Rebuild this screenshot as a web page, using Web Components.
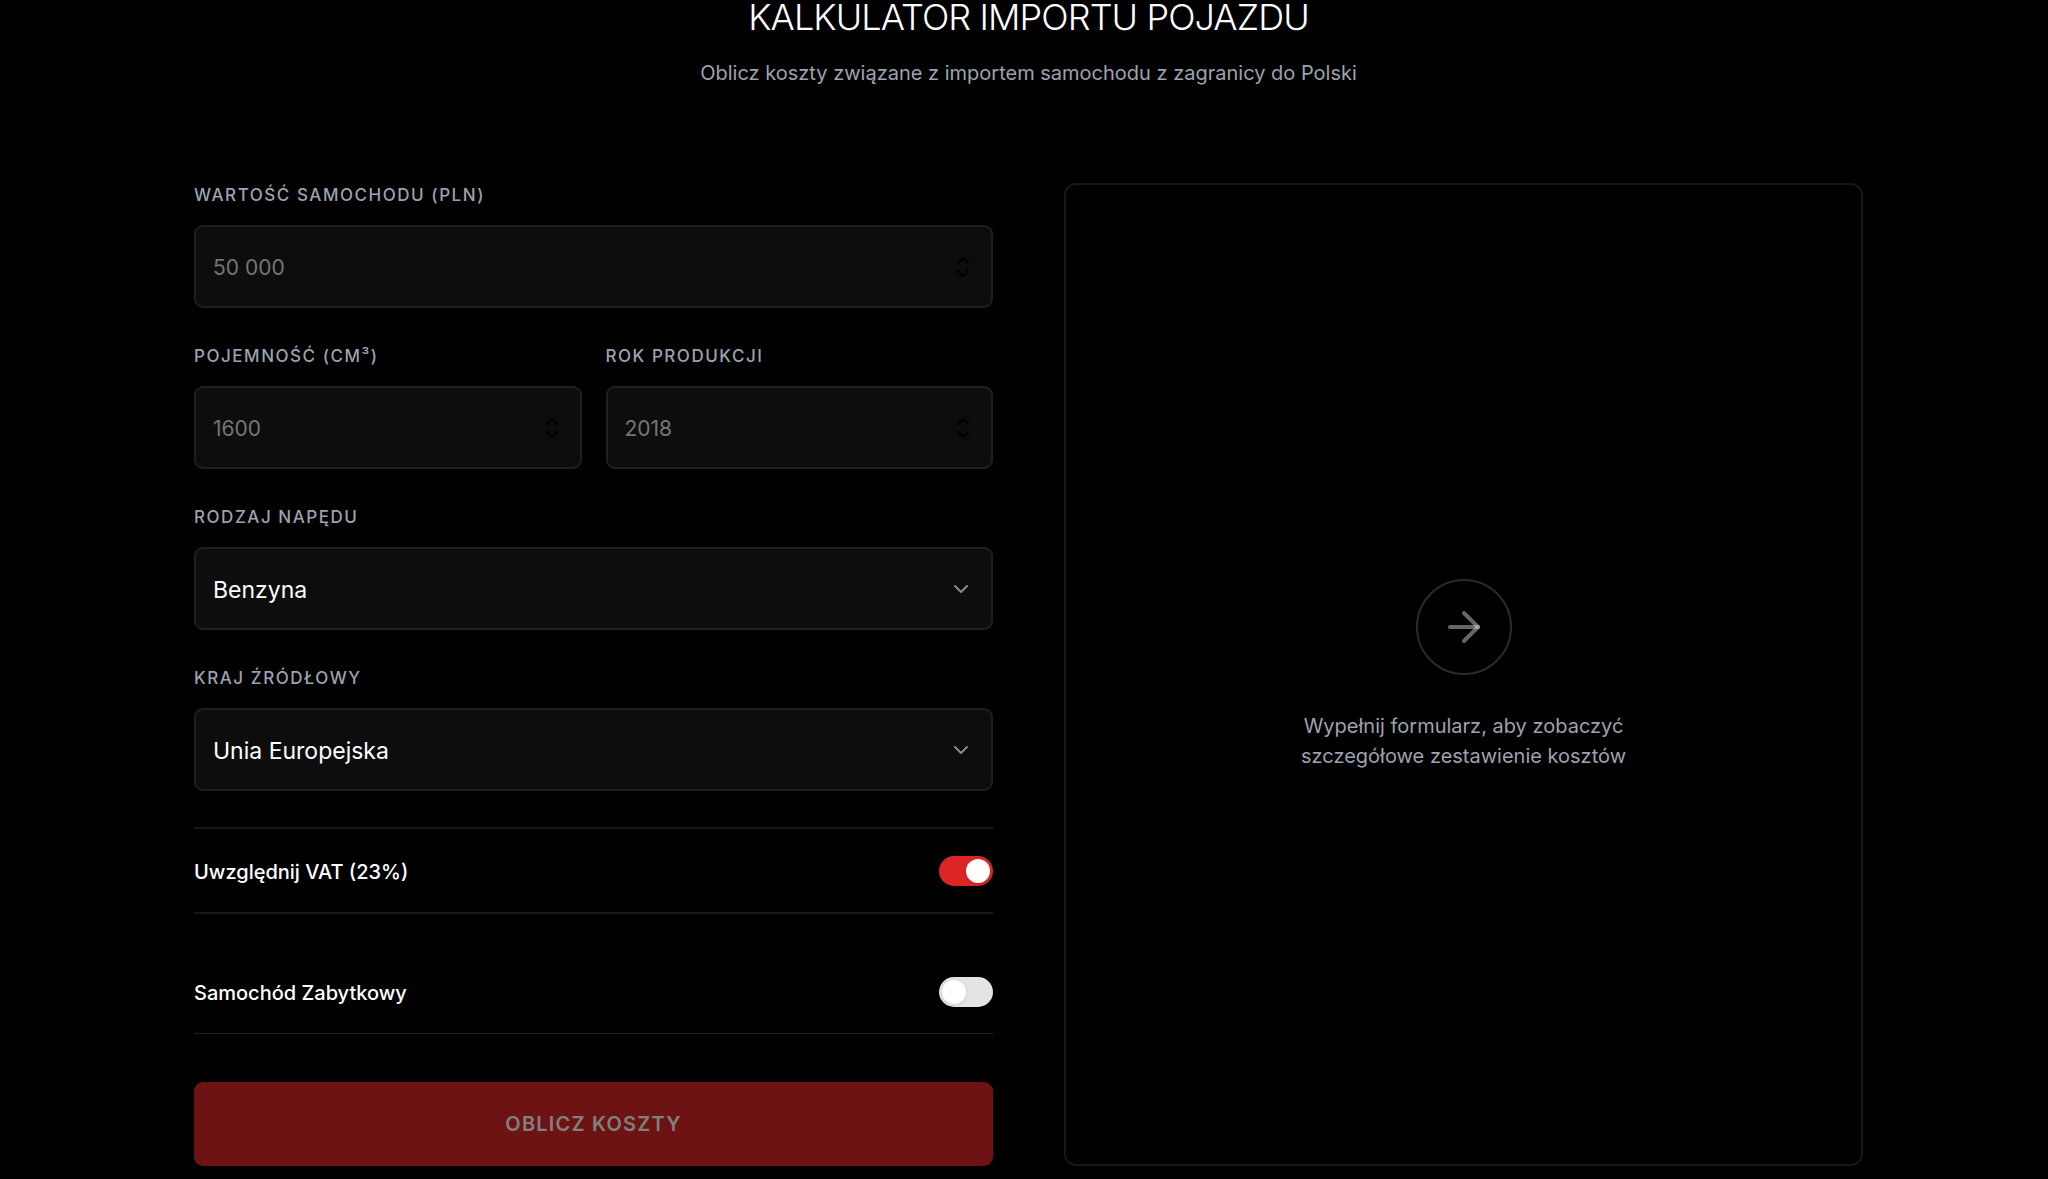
<!DOCTYPE html>
<html lang="pl">
<head>
<meta charset="utf-8">
<title>Kalkulator importu pojazdu</title>
<style>
  body { margin: 0; background: #000; color: #fff; font-family: Inter, "Noto Sans", sans-serif; }
</style>
</head>
<body>
<import-calculator></import-calculator>
<script>
const define = (name, html, setup) => customElements.define(name, class extends HTMLElement {
  connectedCallback() {
    if (this.shadowRoot) return;
    const root = this.attachShadow({ mode: 'open' });
    const t = document.createElement('template');
    t.innerHTML = '<style>*{box-sizing:border-box}:host{display:block}</style>' + html;
    root.append(t.content.cloneNode(true));
    if (setup) setup(this, root);
  }
});

const fieldStyle = `<style>
  :host { min-width: 0; }
  .field { display: flex; flex-direction: column; gap: 18px; }
  label { font-size: 17px; line-height: 24px; font-weight: 500; letter-spacing: 0.09em; text-transform: uppercase; color: #9ca3af; }
  .box { display: grid; align-items: center; }
  .box > * { grid-area: 1 / 1; }
  input, select { appearance: none; width: 100%; height: 83px; margin: 0; padding: 2px 17px 0; border: 2px solid #1f1f1f; border-radius: 9px;
    background: #0d0d0d; color: #fff; font: 400 21px/32px Inter, "Noto Sans", sans-serif; outline: none; }
  select { font-size: 23px; }
  input:focus, select:focus { border-color: #dc2626; }
  svg { justify-self: end; pointer-events: none; fill: none; stroke-linecap: round; stroke-linejoin: round; }
</style>`;

define('number-field', fieldStyle + `<style>
  input { appearance: textfield; }
  input::placeholder { color: #757575; opacity: 1; }
  input::-webkit-inner-spin-button, input::-webkit-outer-spin-button { appearance: none; margin: 0; }
  svg { width: 20px; height: 24px; margin-right: 20px; stroke: #000; stroke-width: 2; }
</style>
<div class="field"><label for="c"><slot></slot></label>
<div class="box"><input id="c" type="number">
<svg viewBox="0 0 20 24" aria-hidden="true"><rect width="20" height="24" rx="6" fill="#0c0c0c" stroke="none"/><path d="M5 8l5-5 5 5"/><path d="M5 16l5 5 5-5"/></svg></div></div>`,
(host, root) => { root.querySelector('input').placeholder = host.getAttribute('placeholder') || ''; });

define('select-field', fieldStyle + `<style>
  svg { width: 24px; height: 24px; margin-right: 20px; stroke: #8a8a8a; stroke-width: 2; }
</style>
<div class="field"><label for="c"><slot></slot></label>
<div class="box"><select id="c"></select>
<svg viewBox="0 0 24 24" aria-hidden="true"><path d="M6 9l6 6 6-6"/></svg></div></div>`,
(host, root) => {
  const select = root.querySelector('select');
  for (const name of host.getAttribute('options').split('|')) select.add(new Option(name));
});

define('toggle-row', `<style>
  :host { border-bottom: 1px solid #1f1f1f; }
  :host([framed]) { border-top: 2px solid #171717; border-bottom: 2px solid #171717; }
  div { display: flex; align-items: center; justify-content: space-between; height: 83px; }
  label { font-size: 20px; line-height: 30px; font-weight: 500; padding-top: 3px; }
  input { appearance: none; display: flex; width: 54px; height: 30px; margin: 0; padding: 3px; border-radius: 15px; background: #e4e4e4; cursor: pointer; }
  input::before { content: ""; width: 24px; height: 24px; border-radius: 50%; background: #fff; box-shadow: 0 1px 4px rgba(0,0,0,.1); }
  input:checked { background: #dc2626; justify-content: flex-end; }
</style>
<div><label for="c"><slot></slot></label><input id="c" type="checkbox" role="switch"></div>`,
(host, root) => { root.querySelector('input').checked = host.hasAttribute('checked'); });

define('submit-button', `<style>
  button { display: block; width: 100%; height: 84px; padding: 0; border: 0; border-radius: 9px; background: #6e1313; color: #808080;
    font: 600 20px/30px Inter, "Noto Sans", sans-serif; letter-spacing: 0.06em; text-transform: uppercase; }
</style><button type="submit" disabled><slot></slot></button>`);

define('empty-result', `<style>
  :host { display: flex; flex-direction: column; align-items: center; justify-content: center; gap: 36px; border: 2px solid #171717; border-radius: 12px; }
  .ring { display: grid; place-items: center; width: 96px; height: 96px; border: 2px solid #2b2b2b; border-radius: 50%; }
  svg { width: 48px; height: 48px; fill: none; stroke: rgba(255,255,255,.4); stroke-width: 2; stroke-linecap: round; stroke-linejoin: round; }
  p { margin: 0; max-width: 384px; font-size: 20px; line-height: 30px; text-align: center; color: #9ca3af; }
</style>
<div class="ring"><svg viewBox="0 0 24 24" aria-hidden="true"><path d="M5 12h14"/><path d="M12 5l7 7-7 7"/></svg></div>
<p><slot></slot></p>`);

define('page-heading', `<style>
  :host { text-align: center; }
  h1 { margin: 0 0 24px; font-size: 36px; line-height: 34px; font-weight: 300; letter-spacing: -0.025em; text-transform: uppercase; }
  p { margin: 0; font-size: 20px; line-height: 30px; color: #9ca3af; }
</style><h1><slot></slot></h1><p><slot name="lead"></slot></p>`);

define('import-calculator', `<style>
  main { padding: 0 185px 13px 194px; display: flex; flex-direction: column; gap: 95px; }
  .columns { display: grid; grid-template-columns: 1fr 1fr; gap: 71px; }
  form { display: flex; flex-direction: column; gap: 36px; min-width: 0; }
  .pair { display: grid; grid-template-columns: 1fr 1fr; gap: 24px; }
  submit-button { padding-top: 12px; }
</style>
<main>
  <page-heading>Kalkulator importu pojazdu<span slot="lead">Oblicz koszty związane z importem samochodu z zagranicy do Polski</span></page-heading>
  <div class="columns">
    <form>
      <number-field placeholder="50 000">Wartość samochodu (PLN)</number-field>
      <div class="pair">
        <number-field placeholder="1600">Pojemność (cm³)</number-field>
        <number-field placeholder="2018">Rok produkcji</number-field>
      </div>
      <select-field options="Benzyna|Diesel|Hybryda|Elektryczny">Rodzaj napędu</select-field>
      <select-field options="Unia Europejska|USA|Szwajcaria|Japonia">Kraj źródłowy</select-field>
      <toggle-row framed checked>Uwzględnij VAT (23%)</toggle-row>
      <toggle-row>Samochód Zabytkowy</toggle-row>
      <submit-button>Oblicz koszty</submit-button>
    </form>
    <empty-result>Wypełnij formularz, aby zobaczyć szczegółowe zestawienie kosztów</empty-result>
  </div>
</main>`);
</script>
</body>
</html>
